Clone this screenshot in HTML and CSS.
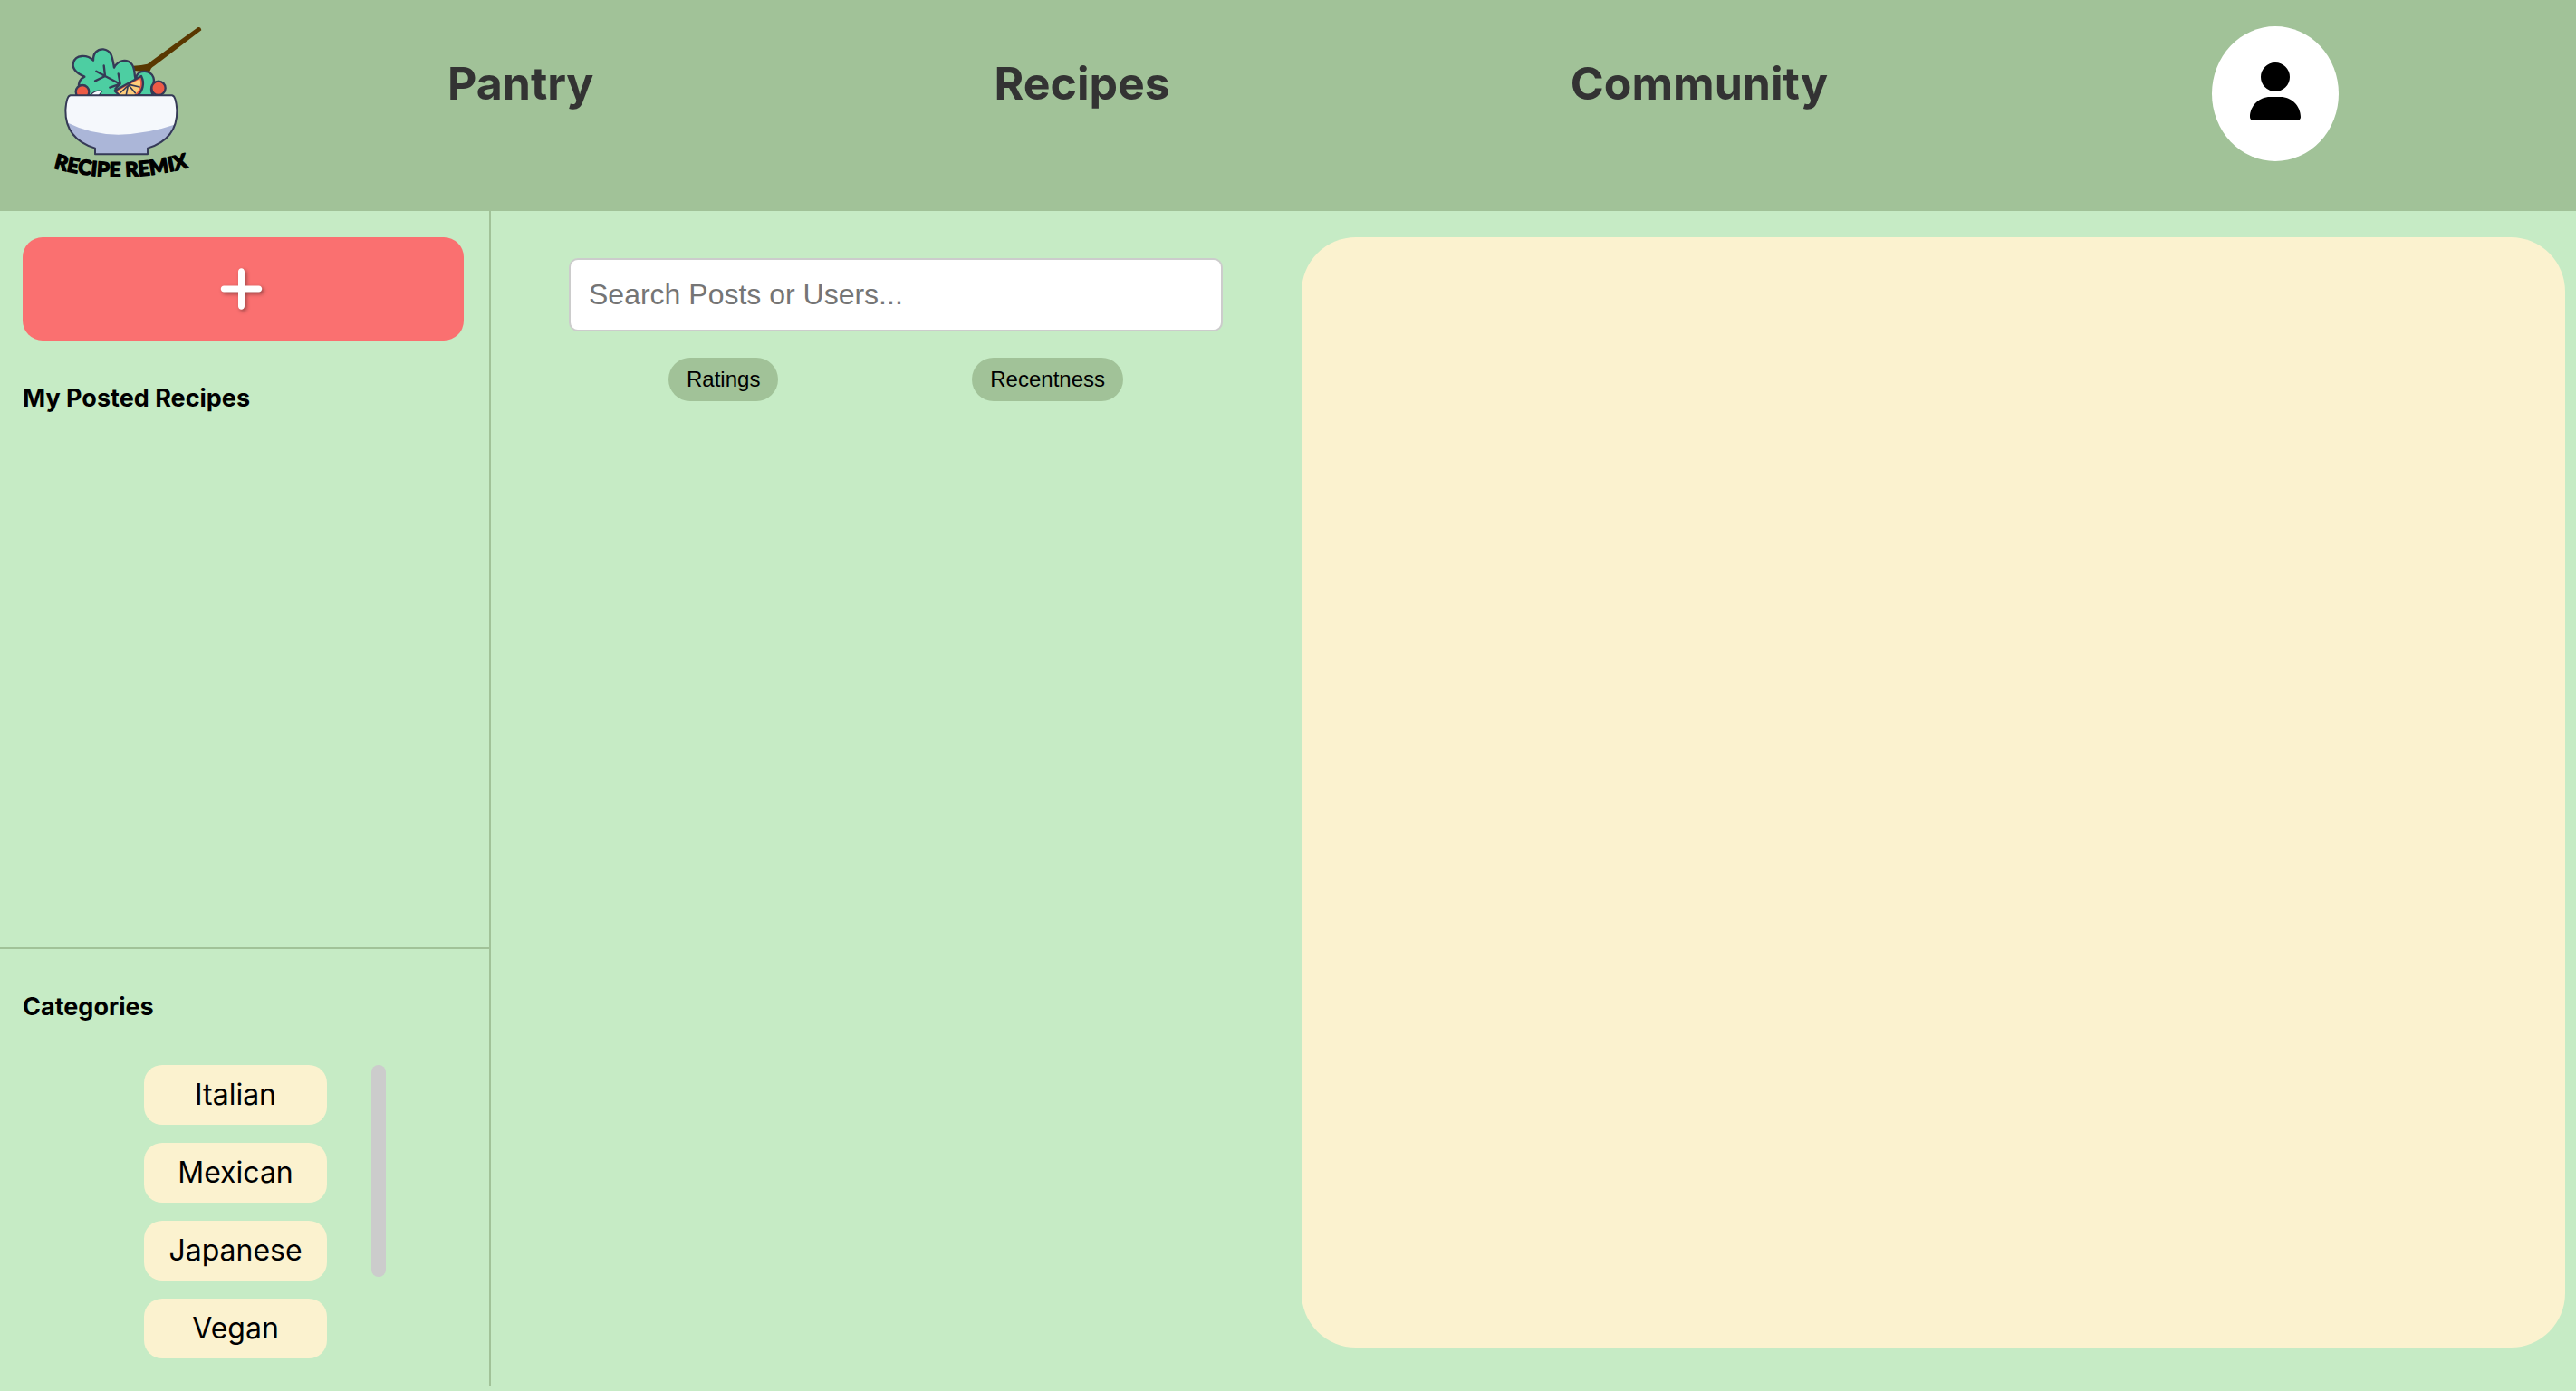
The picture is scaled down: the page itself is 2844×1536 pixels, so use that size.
FILE: index.html
```html
<!DOCTYPE html>
<html lang="en">
<head>
<meta charset="utf-8">
<meta name="viewport" content="width=device-width, initial-scale=1">
<title>Recipe Remix - Community</title>
<link rel="stylesheet" href="styles.css">
</head>
<body>
<header class="header">
  <a class="logo" href="#" aria-label="Recipe Remix home">
    <svg class="logo-art" viewBox="0 0 600 600">
      <path d="M326 204 L322 188 Q350 186 368 182 Q376 180 382 172 L536 60 Q545 58 547 70 L391 188 Q378 194 376 210 Z" fill="#593700"/>
      <g stroke="#353a56" stroke-width="7" stroke-linejoin="round" stroke-linecap="round">
        <path d="M332 222 C342 200 378 202 388 226 Q394 244 382 258 Q378 272 388 286 H330 Z" fill="#4dcea2"/>
        <path d="M142 262 C138 244 144 232 160 224 C136 214 118 198 123 178 C130 150 168 150 189 170 C188 146 202 132 222 133 C250 136 252 160 258 194 C272 168 300 164 316 182 C328 198 324 214 328 228 L326 286 H150 Z" fill="#4dcea2"/>
        <path d="M195 238 L228 222 L199 206 M228 222 L224 187 M228 222 L278 248 M244 260 L278 248 L272 214 M278 248 L262 264" fill="none"/>
        <path d="M260 271 L348 222 C360 246 352 272 336 286 H276 Z" fill="#ec5b46"/>
        <path d="M268 272 L343 232 C350 252 340 274 324 286 H280 Z" fill="#ffce7b" stroke="none"/>
        <path d="M304 254 L298 284 M306 252 L328 278 M308 250 L342 258 M304 254 L280 276 M306 252 L314 242" fill="none" stroke-width="5"/>
        <path d="M180 284 Q198 266 218 272 L208 286" fill="#f5f8fc" stroke-width="4"/>
        <circle cx="153" cy="274" r="22" fill="#ec5b46"/>
        <circle cx="405" cy="262" r="23" fill="#ec5b46"/>
      </g>
      <path d="M113 286 H450 Q463 288 466 335 Q468 430 369 461 V481 H195 V461 Q96 430 97 335 Q100 288 113 286 Z" fill="#f5f8fc"/>
      <path d="M102 376 Q180 416 272 416 Q370 414 462 382 Q448 440 369 461 V481 H195 V461 Q112 436 102 376 Z" fill="#abb6d8"/>
      <path d="M113 286 H450 Q463 288 466 335 Q468 430 369 461 V481 H195 V461 Q96 430 97 335 Q100 288 113 286 Z" fill="none" stroke="#353a56" stroke-width="6" stroke-linejoin="round"/>
      <path id="name-curve" d="M57 526 Q285 592 540 514" fill="none"/>
      <text class="logo-name"><textPath href="#name-curve">RECIPE REMIX</textPath></text>
    </svg>
  </a>
  <nav class="nav">
    <a class="nav-link" href="#">Pantry</a>
    <a class="nav-link" href="#">Recipes</a>
    <a class="nav-link" href="#">Community</a>
  </nav>
  <button class="avatar" type="button" aria-label="Profile">
    <svg class="avatar-icon" viewBox="0 0 448 512"><path d="M224 256A128 128 0 1 0 224 0a128 128 0 1 0 0 256zm-45.7 48C79.8 304 0 383.8 0 482.3C0 498.7 13.3 512 29.7 512H418.3c16.4 0 29.7-13.3 29.7-29.7C448 383.8 368.2 304 269.7 304H178.3z"/></svg>
  </button>
</header>
<main class="main">
  <aside class="sidebar">
    <section class="posted">
      <button class="add" type="button" aria-label="Add recipe">
        <svg class="add-icon" viewBox="0 0 448 512"><path d="M256 80c0-17.7-14.3-32-32-32s-32 14.3-32 32V224H48c-17.7 0-32 14.3-32 32s14.3 32 32 32H192V432c0 17.7 14.3 32 32 32s32-14.3 32-32V288H400c17.7 0 32-14.3 32-32s-14.3-32-32-32H256V80z"/></svg>
      </button>
      <h2 class="side-title">My Posted Recipes</h2>
    </section>
    <section class="categories">
      <h2 class="side-title">Categories</h2>
      <div class="category-area">
        <div class="category-list">
          <button class="category" type="button">Italian</button>
          <button class="category" type="button">Mexican</button>
          <button class="category" type="button">Japanese</button>
          <button class="category" type="button">Vegan</button>
        </div>
        <div class="scroll-thumb"></div>
      </div>
    </section>
  </aside>
  <section class="feed">
    <input class="search" type="search" placeholder="Search Posts or Users..." aria-label="Search posts or users">
    <div class="filters">
      <button class="filter" type="button">Ratings</button>
      <button class="filter" type="button">Recentness</button>
    </div>
  </section>
  <section class="detail" aria-label="Selected post"></section>
</main>
</body>
</html>
```
FILE: styles.css
```css
* {
  box-sizing: border-box;
}

body {
  margin: 0;
  min-height: 100vh;
  display: flex;
  flex-direction: column;
  background: #c6ebc5;
  color: #000;
  font-family: Inter, "Open Sans", sans-serif;
}

button {
  border: 0;
  color: inherit;
  cursor: pointer;
}

.header {
  display: flex;
  align-items: flex-start;
  padding: 10px 262px 23px 40px;
  background: #a1c298;
}

.logo {
  flex: none;
}

.logo-art {
  display: block;
  width: 200px;
  height: 200px;
}

.logo-name {
  font-family: Lato, sans-serif;
  font-size: 67px;
  font-weight: 900;
  stroke: #000;
  stroke-width: 4px;
  stroke-linejoin: round;
}

.nav {
  flex: 1;
  display: flex;
  justify-content: space-between;
  padding: 46px 424px 0 254px;
}

.nav-link {
  color: #333;
  font-size: 50px;
  line-height: 72px;
  font-weight: 700;
  text-decoration: none;
}

.avatar {
  flex: none;
  width: 140px;
  margin-top: 19px;
  padding: 40px 0 45px;
  border-radius: 50%;
  background: #fff;
}

.avatar-icon {
  display: block;
  height: 64px;
  margin: 0 auto;
}

.main {
  flex: 1;
  display: grid;
  grid-template-columns: 542px 895fr 1407fr;
  padding-bottom: 5px;
}

.sidebar {
  display: flex;
  flex-direction: column;
  border-right: 2px solid #a1c298;
}

.posted {
  flex: 1;
  padding: 29px 28px 0 25px;
}

.add {
  display: block;
  width: 100%;
  padding: 29px 5px 29px 0;
  border-radius: 22px;
  background: #fa7070;
}

.add-icon {
  display: block;
  height: 56px;
  margin: 0 auto;
  fill: #fff;
  filter: drop-shadow(2px 2px 2px rgba(0, 0, 0, 0.4));
}

.side-title {
  margin: 0;
  font-size: 27px;
  line-height: 40px;
  font-weight: 700;
}

.posted .side-title {
  margin-top: 44px;
}

.categories {
  padding: 44px 25px 31px;
  border-top: 2px solid #a1c298;
}

.category-area {
  display: flex;
  justify-content: center;
  gap: 49px;
  margin-top: 44px;
  padding-left: 45px;
}

.category-list {
  width: 202px;
  display: flex;
  flex-direction: column;
  gap: 20px;
}

.category {
  padding: 9px 0;
  border-radius: 20px;
  background: #fbf2cf;
  font-family: inherit;
  font-size: 32px;
  line-height: 48px;
}

.scroll-thumb {
  width: 16px;
  height: 234px;
  border-radius: 8px;
  background: #ccc;
}

.feed {
  padding: 52px 87px 0 86px;
}

.search {
  display: block;
  width: 100%;
  padding: 20px;
  border: 2px solid #ccc;
  border-radius: 10px;
  background: #fff;
  font-family: "Liberation Sans", Arial, sans-serif;
  font-size: 32px;
  line-height: 37px;
}

.search::placeholder {
  color: #757575;
}

.filters {
  display: flex;
  justify-content: space-between;
  margin-top: 29px;
  padding: 0 110px;
}

.filter {
  padding: 10px 20px;
  border-radius: 24px;
  background: #a1c298;
  font-family: "Liberation Sans", Arial, sans-serif;
  font-size: 24px;
  line-height: 28px;
}

.detail {
  margin: 29px 12px 43px 0;
  border-radius: 60px;
  background: #fbf2cf;
}
```
